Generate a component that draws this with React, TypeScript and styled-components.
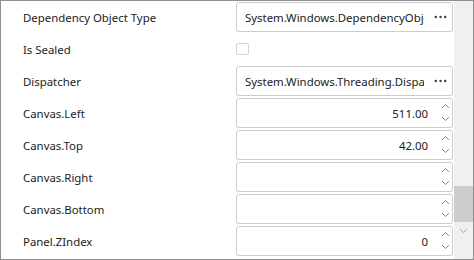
import React from "react";
import styled, { createGlobalStyle } from "styled-components";

const GlobalStyle = createGlobalStyle`
    body {
        margin: 0;
        background: #ffffff;
        font-family: "Noto Sans", "Open Sans", sans-serif;
    }
`;

type Row =
    | { label: string; kind: "object"; value: string }
    | { label: string; kind: "check" }
    | { label: string; kind: "number"; value: string };

const rows: Row[] = [
    { label: "Dependency Object Type", kind: "object", value: "System.Windows.DependencyObject" },
    { label: "Is Sealed", kind: "check" },
    { label: "Dispatcher", kind: "object", value: "System.Windows.Threading.Dispatcher" },
    { label: "Canvas.Left", kind: "number", value: "511.00" },
    { label: "Canvas.Top", kind: "number", value: "42.00" },
    { label: "Canvas.Right", kind: "number", value: "" },
    { label: "Canvas.Bottom", kind: "number", value: "" },
    { label: "Panel.ZIndex", kind: "number", value: "0" },
];

function Chevron({ up }: { up?: boolean }) {
    return (
        <svg width="9" height="6" viewBox="0 0 9 6">
            <polyline
                points={up ? "1,5 4.5,1.5 8,5" : "1,1 4.5,4.5 8,1"}
                fill="none"
                stroke="#8a8a8a"
                strokeWidth="1"
            />
        </svg>
    );
}

function Dots() {
    return (
        <svg width="13" height="4" viewBox="0 0 13 4">
            <circle cx="1.8" cy="2" r="1.2" fill="#3a3a3a" />
            <circle cx="6.5" cy="2" r="1.2" fill="#3a3a3a" />
            <circle cx="11.2" cy="2" r="1.2" fill="#3a3a3a" />
        </svg>
    );
}

export default function App() {
    return (
        <>
            <GlobalStyle />
            <Window>
                <Grid>
                    {rows.map((row) => (
                        <PropertyRow key={row.label}>
                            <Label>{row.label}</Label>
                            {row.kind === "object" && (
                                <Editor>
                                    <ValueText>{row.value}</ValueText>
                                    <EllipsisButton>
                                        <Dots />
                                    </EllipsisButton>
                                </Editor>
                            )}
                            {row.kind === "check" && (
                                <CheckCell>
                                    <CheckBox />
                                </CheckCell>
                            )}
                            {row.kind === "number" && (
                                <Editor>
                                    <NumberText>{row.value}</NumberText>
                                    <Spinner>
                                        <Chevron up />
                                        <Chevron />
                                    </Spinner>
                                </Editor>
                            )}
                        </PropertyRow>
                    ))}
                </Grid>
                <ScrollBar>
                    <ScrollSpace />
                    <Thumb />
                    <ScrollArrow>
                        <svg width="9" height="6" viewBox="0 0 9 6">
                            <polyline points="1,1 4.5,4.5 8,1" fill="none" stroke="#a6a6a6" strokeWidth="1" />
                        </svg>
                    </ScrollArrow>
                </ScrollBar>
            </Window>
        </>
    );
}

const Window = styled.div`
    width: 474px;
    height: 260px;
    box-sizing: border-box;
    border: 1px solid #8f8f8f;
    background: #ffffff;
    display: flex;
    overflow: hidden;
`;

const Grid = styled.div`
    width: 452px;
    padding: 1px 0 0 22px;
    box-sizing: border-box;
    display: flex;
    flex-direction: column;
    gap: 2px;
`;

const PropertyRow = styled.div`
    display: grid;
    grid-template-columns: 213px 217px;
    height: 30px;
    flex-shrink: 0;
    align-items: center;
`;

const Label = styled.div`
    font-size: 11.4px;
    color: #1b1b1b;
    white-space: nowrap;
`;

const Editor = styled.div`
    height: 30px;
    box-sizing: border-box;
    border: 1px solid #cccccc;
    border-radius: 3px;
    display: flex;
    align-items: center;
    overflow: hidden;
`;

const ValueText = styled.div`
    flex: 1;
    min-width: 0;
    padding-left: 8px;
    font-size: 11.4px;
    color: #1b1b1b;
    white-space: nowrap;
    overflow: hidden;
`;

const EllipsisButton = styled.div`
    width: 28px;
    height: 100%;
    display: flex;
    align-items: center;
    justify-content: flex-end;
    padding-right: 5px;
    box-sizing: border-box;
    flex-shrink: 0;
`;

const NumberText = styled.div`
    flex: 1;
    text-align: right;
    padding-right: 10px;
    font-size: 11.4px;
    color: #1b1b1b;
`;

const Spinner = styled.div`
    width: 14px;
    height: 100%;
    display: flex;
    flex-direction: column;
    justify-content: space-between;
    align-items: center;
    padding: 4px 0 5px;
    box-sizing: border-box;
    flex-shrink: 0;
`;

const CheckCell = styled.div`
    display: flex;
    align-items: center;
`;

const CheckBox = styled.div`
    width: 13px;
    height: 12px;
    box-sizing: border-box;
    border: 1px solid #d4d4d4;
    border-radius: 2px;
    background: #ffffff;
`;

const ScrollBar = styled.div`
    width: 19px;
    margin-left: 1px;
    background: #f0f0f0;
    display: flex;
    flex-direction: column;
`;

const ScrollSpace = styled.div`
    height: 185px;
`;

const Thumb = styled.div`
    height: 36px;
    background: #cdcdcd;
`;

const ScrollArrow = styled.div`
    height: 17px;
    display: flex;
    align-items: center;
    justify-content: center;
`;
